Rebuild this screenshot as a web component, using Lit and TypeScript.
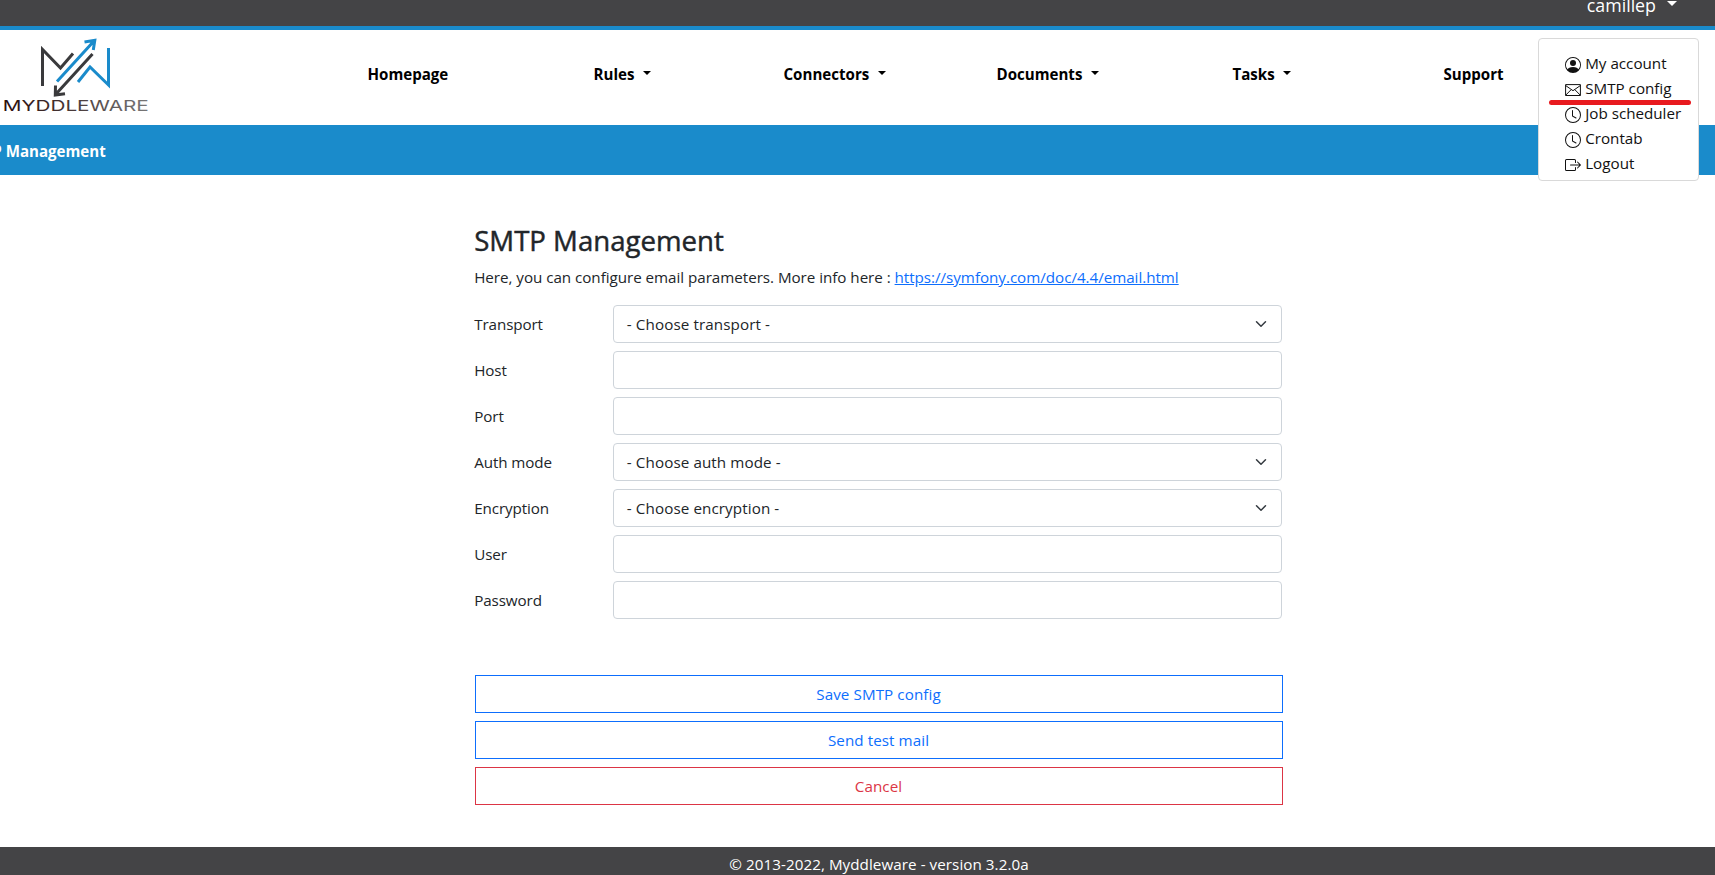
import { LitElement, html, css, svg, nothing } from "lit";
import { customElement } from "lit/decorators.js";

const NAV = [
  { label: "Homepage", menu: false },
  { label: "Rules", menu: true },
  { label: "Connectors", menu: true },
  { label: "Documents", menu: true },
  { label: "Tasks", menu: true },
  { label: "Support", menu: false },
];

const FIELDS = [
  { label: "Transport", choice: "- Choose transport -" },
  { label: "Host" },
  { label: "Port" },
  { label: "Auth mode", choice: "- Choose auth mode -" },
  { label: "Encryption", choice: "- Choose encryption -" },
  { label: "User" },
  { label: "Password" },
];

const ICONS = {
  person: svg`<path d="M11 6a3 3 0 1 1-6 0 3 3 0 0 1 6 0z"/><path fill-rule="evenodd" d="M0 8a8 8 0 1 1 16 0A8 8 0 0 1 0 8zm8-7a7 7 0 0 0-5.468 11.37C3.242 11.226 4.805 10 8 10s4.757 1.225 5.468 2.37A7 7 0 0 0 8 1z"/>`,
  envelope: svg`<path fill="none" stroke="currentColor" stroke-linejoin="round" d="M.6 2.600h14.800v10.900H.6zM.6 3.500l7.400 5.200 7.400-5.200M.6 13.300l5.600-5.700M15.400 13.300l-5.600-5.700"/>`,
  clock: svg`<path d="M8 3.5a.5.5 0 0 0-1 0V9a.5.5 0 0 0 .252.434l3.5 2a.5.5 0 0 0 .496-.868L8 8.71V3.5z"/><path d="M8 16A8 8 0 1 0 8 0a8 8 0 0 0 0 16zm7-8A7 7 0 1 1 1 8a7 7 0 0 1 14 0z"/>`,
  logout: svg`<path fill-rule="evenodd" d="M10 12.5a.5.5 0 0 1-.5.5h-8a.5.5 0 0 1-.5-.5v-9a.5.5 0 0 1 .5-.5h8a.5.5 0 0 1 .5.5v2a.5.5 0 0 0 1 0v-2A1.5 1.5 0 0 0 9.500 2h-8A1.500 1.500 0 0 0 0 3.500v9A1.500 1.500 0 0 0 1.500 14h8a1.500 1.500 0 0 0 1.500-1.500v-2a.5.5 0 0 0-1 0v2z"/><path fill-rule="evenodd" d="M15.854 8.354a.5.5 0 0 0 0-.708l-3-3a.5.5 0 0 0-.708.708L14.293 7.500H5.500a.5.5 0 0 0 0 1h8.793l-2.147 2.146a.5.5 0 0 0 .708.708l3-3z"/>`,
};

const ACCOUNT = [
  { label: "My account", icon: ICONS.person },
  { label: "SMTP config", icon: ICONS.envelope },
  { label: "Job scheduler", icon: ICONS.clock },
  { label: "Crontab", icon: ICONS.clock },
  { label: "Logout", icon: ICONS.logout },
];

@customElement("myd-logo")
class MydLogo extends LitElement {
  static styles = css`
    :host { display: block; width: 150px; height: 84px; }
    .art { display: block; }
    .word { font: 400 14.600px Inter, sans-serif; }
  `;
  render() {
    return html`<svg class="art" width="150" height="84" viewBox="0 30 150 84" fill="none" stroke-width="3">
      <defs>
        <linearGradient id="ink" gradientUnits="userSpaceOnUse" x1="4" y1="0" x2="148" y2="0">
          <stop offset="0" stop-color="#2a0e0e" />
          <stop offset="0.5" stop-color="#4a3c3c" />
          <stop offset="1" stop-color="#777" />
        </linearGradient>
      </defs>
      <g stroke="#3a3a3c">
        <path d="M42.500 86V49.500L60.500 68L73 53.500" />
        <path d="M92.500 54L56 94M55.500 85.500L55.300 95L65 93.700" />
      </g>
      <g stroke="#1a8bcb">
        <path d="M57 81.500L94 41M84.500 42L94.800 40.300L93.300 50" />
        <path d="M78 82L90 67L108.500 85V48" />
      </g>
      <text class="word" x="2.800" y="111.300" fill="url(#ink)" textLength="146" lengthAdjust="spacingAndGlyphs">MYDDLEWARE</text>
    </svg>`;
  }
}

@customElement("app-root")
class AppRoot extends LitElement {
  static styles = css`
    :host {
      display: block;
      height: 875px;
      overflow: hidden;
      background: #fff;
      color: #212529;
      font: 400 15.200px/24px "Open Sans", "Noto Sans", sans-serif;
    }
    * { box-sizing: border-box; }
    .page { position: relative; height: 875px; display: flex; flex-direction: column; overflow: hidden; }
    .topbar {
      height: 30px; flex: none; background: #444446; border-bottom: 4px solid #1a8bcb;
      display: flex; justify-content: flex-end; align-items: flex-end;
      padding: 0 38px 9px 0; color: #fff; font-size: 17.800px;
    }
    .user { display: flex; align-items: center; gap: 11px; line-height: 24px; }
    .caret { border-top: 4.800px solid; border-left: 4.800px solid transparent; border-right: 4.800px solid transparent; }
    .user .caret { border-width: 5.400px 5.400px 0; margin-top: -3px; }
    .header { height: 95px; flex: none; display: flex; }
    .nav {
      display: grid; grid-template-columns: 226px 190px 213px 236px 211px auto;
      margin-left: 217.500px; padding-top: 32px; color: #000; font-weight: 700; font-size: 15.100px;
    }
    .item { display: flex; align-items: center; gap: 8.500px; height: 24px; }
    .item .caret { margin-top: -3px; }
    .titlebar {
      height: 50px; flex: none; background: #1a8bcb; color: #fff; font-weight: 700; font-size: 15.100px;
      padding-top: 14px; display: flex;
    }
    .title { margin-left: -39px; white-space: nowrap; }
    .main { width: 809px; margin: 0 0 0 474px; padding: 48px 0 42px 1px; }
    .heading { margin: 0 0 8px; font-size: 27.600px; line-height: 34px; font-weight: 500; -webkit-text-stroke: 0.450px #212529; text-indent: -0.800px; }
    .intro { margin: 0 0 16px; white-space: nowrap; letter-spacing: -0.035px; text-indent: -0.800px; }
    .link { color: #0d6efd; text-decoration: underline; }
    .form { display: grid; gap: 8px; padding-right: 1px; }
    .row { display: grid; grid-template-columns: 138px 1fr; align-items: center; height: 38px; }
    .label { letter-spacing: -0.100px; text-indent: -0.800px; }
    .control {
      width: 100%; height: 38px; border: 1px solid #ced4da; border-radius: 4px; background: #fff;
      padding: 6px 12px; font: inherit; color: inherit; outline: none; margin: 0;
    }
    .choice { display: flex; align-items: center; justify-content: space-between; letter-spacing: 0.100px; padding-left: 12.800px; }
    .chevron { width: 16px; height: 12px; }
    .actions { display: grid; gap: 8px; margin-top: 56px; }
    .btn {
      height: 38px; border: 1px solid #0d6efd; color: #0d6efd; background: #fff; border-radius: 0;
      font: inherit; padding: 6px 13px 6px 12px; letter-spacing: 0.080px;
    }
    .btn.danger { border-color: #dc3545; color: #dc3545; }
    .footer { flex: 1; background: #444446; color: #fff; text-align: center; padding: 5px 0 0 43px; letter-spacing: 0.060px; }
    .menu {
      position: absolute; left: 1538px; top: 38px; width: 161px; height: 143px; background: #fff;
      border: 1px solid #d9d9d9; border-radius: 4px; padding: 12px 0 0 26px; color: #212529;
    }
    .entry { display: flex; align-items: flex-start; gap: 4.200px; height: 25px; white-space: nowrap; line-height: 24px; color: #111; }
    .icon { width: 16px; height: 16px; flex: none; margin-top: 6px; }
    .marker { position: absolute; left: 1548.500px; top: 99.500px; width: 142px; height: 5px; border-radius: 3px; background: #e81a1f; }
  `;

  render() {
    return html`<div class="page">
      <div class="topbar"><div class="user"><span>camillep</span><span class="caret"></span></div></div>
      <div class="header">
        <myd-logo></myd-logo>
        <nav class="nav">
          ${NAV.map((n) => html`<div class="item"><span>${n.label}</span>${n.menu ? html`<span class="caret"></span>` : nothing}</div>`)}
        </nav>
      </div>
      <div class="titlebar"><span class="title">SMTP Management</span></div>
      <main class="main">
        <h1 class="heading">SMTP Management</h1>
        <p class="intro">Here, you can configure email parameters. More info here : <a class="link">https://symfony.com/doc/4.4/email.html</a></p>
        <div class="form">
          ${FIELDS.map((f) => html`<div class="row"><label class="label">${f.label}</label>${f.choice
            ? html`<div class="control choice"><span>${f.choice}</span><svg class="chevron" viewBox="0 0 16 16"><path fill="none" stroke="#343a40" stroke-linecap="round" stroke-linejoin="round" stroke-width="2" d="m2 5 6 6 6-6" /></svg></div>`
            : html`<input class="control" />`}</div>`)}
        </div>
        <div class="actions">
          <button class="btn">Save SMTP config</button>
          <button class="btn">Send test mail</button>
          <button class="btn danger">Cancel</button>
        </div>
      </main>
      <footer class="footer">© 2013-2022, Myddleware - version 3.2.0a</footer>
      <div class="menu">
        ${ACCOUNT.map((a) => html`<div class="entry"><svg class="icon" viewBox="0 0 16 16" fill="currentColor">${a.icon}</svg><span>${a.label}</span></div>`)}
      </div>
      <div class="marker"></div>
    </div>`;
  }
}
